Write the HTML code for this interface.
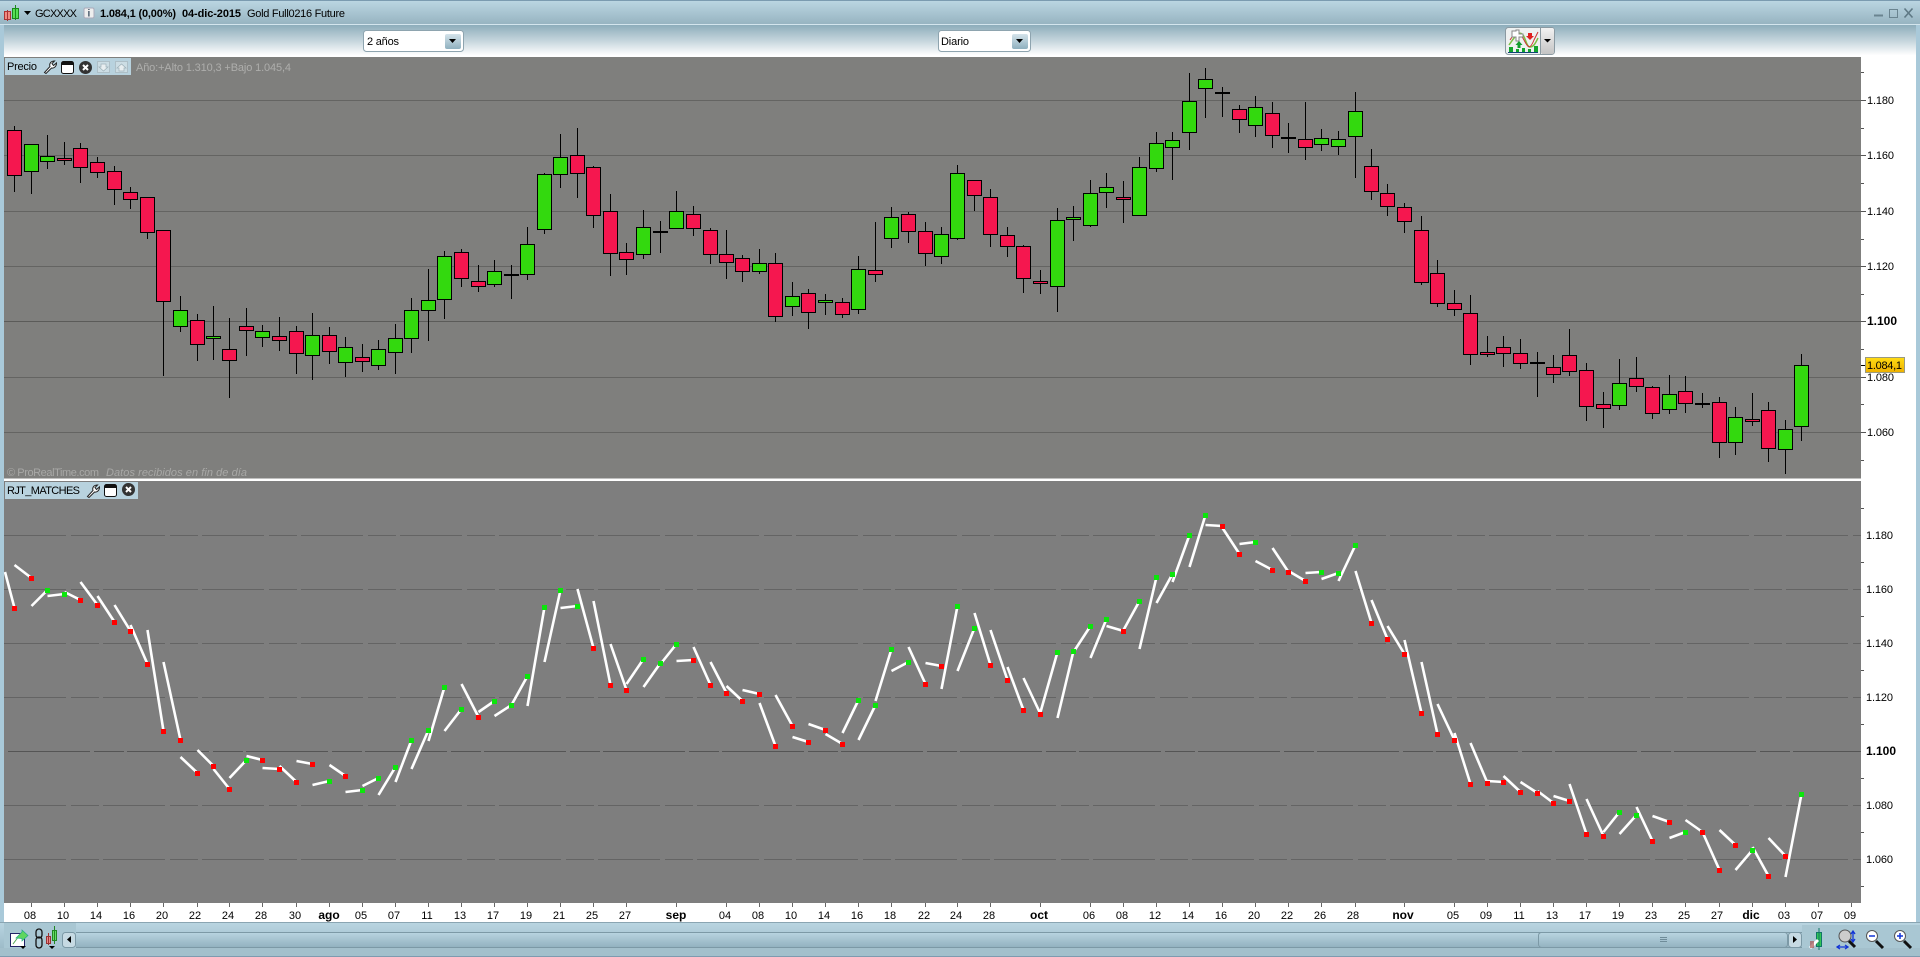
<!DOCTYPE html>
<html lang="es"><head><meta charset="utf-8"><title>GCXXXX</title>
<style>html,body{margin:0;padding:0;background:#fff;overflow:hidden}svg{display:block}text{font-family:"Liberation Sans",sans-serif;font-size:11px;fill:#000}</style>
</head><body>
<svg xmlns="http://www.w3.org/2000/svg" width="1920" height="957" viewBox="0 0 1920 957">
<defs>
<linearGradient id="gT" x1="0" y1="0" x2="0" y2="1"><stop offset="0" stop-color="#bcd7e3"/><stop offset="1" stop-color="#97b4c1"/></linearGradient>
<linearGradient id="gB" x1="0" y1="0" x2="0" y2="1"><stop offset="0" stop-color="#8dadbb"/><stop offset=".5" stop-color="#c6d6dd"/><stop offset=".95" stop-color="#fff"/></linearGradient>
<linearGradient id="gS" x1="0" y1="0" x2="0" y2="1"><stop offset="0" stop-color="#b9d5e1"/><stop offset="1" stop-color="#93b2c0"/></linearGradient>
<linearGradient id="gA" x1="0" y1="0" x2="0" y2="1"><stop offset="0" stop-color="#d5e3ea"/><stop offset="1" stop-color="#8fb0bf"/></linearGradient>
<linearGradient id="gY" x1="0" y1="0" x2="0" y2="1"><stop offset="0" stop-color="#ffdc14"/><stop offset="1" stop-color="#eeb000"/></linearGradient>
<linearGradient id="gG" x1="0" y1="0" x2="0" y2="1"><stop offset="0" stop-color="#f2f2f2"/><stop offset="1" stop-color="#c4c4c4"/></linearGradient>
<g id="wr"><path d="M1.5 12.5L7 6.5C6 3.500 8 1 11.500 1L9 3.500L10.500 5.500L13.500 3C13.500 6.500 11 8.500 8.500 8L3 13.500Z" fill="#fff" stroke="#222" stroke-width="1"/></g>
<g id="wi"><rect x=".5" y=".5" width="12" height="12" rx="2" fill="#fff" stroke="#111"/><rect x="1" y="1" width="11" height="3" fill="#111"/></g>
<g id="cl"><circle cx="6.500" cy="6.500" r="6.500" fill="#333"/><path d="M4 4L9 9M9 4L4 9" stroke="#fff" stroke-width="2"/></g>
</defs>

<rect width="1920" height="957" fill="#fff"/>
<!-- frame -->
<rect width="4" height="957" fill="#a9c9d9"/>
<rect x="1916" width="4" height="957" fill="#a9c9d9"/>
<rect width="1920" height="24" fill="url(#gT)"/>
<rect width="1920" height="1" fill="#7b9bb0"/>
<rect y="24" width="1920" height="1" fill="#d3e5ed"/>
<rect x="4" y="25" width="1912" height="32" fill="url(#gB)"/>
<rect x="1861" y="57" width="55" height="866" fill="#fff"/>

<!-- panels -->
<rect x="4" y="57" width="1857" height="421.500" fill="#7f7f7d"/>
<rect x="4" y="478.500" width="1857" height="2.500" fill="#fff"/>
<rect x="4" y="481" width="1857" height="422" fill="#7e7e7e"/>
<rect x="4" y="903" width="1912" height="20" fill="#fff"/>

<!-- grid -->
<path d="M4 100.500H1861M4 155.500H1861M4 211.500H1861M4 266.500H1861M4 377.500H1861M4 432.500H1861" stroke="#646462" stroke-width="1"/>
<path d="M4 321.500H1861" stroke="#5b5b59" stroke-width="1"/>
<path d="M4 535.500H1861M4 589.500H1861M4 643.500H1861M4 697.500H1861M4 805.500H1861M4 859.500H1861" stroke="#646464" stroke-width="1" stroke-dasharray="62 5 28 4"/>
<path d="M8 751.500H1861" stroke="#555" stroke-width="1" stroke-dasharray="82 4 30 3"/>

<!-- wicks -->
<path fill="none" stroke="#000" stroke-width="1" d="M14.500 126V192M31.500 144V194M47.500 135V169M64.500 142V165M80.500 143V183M97.500 157V178M114.500 166V205M130.500 187V209M147.500 197V239M163.500 230V376M180.500 296V332M197.500 314V361M213.500 306V360M229.500 318V398M246.500 308V356M262.500 325V347M279.500 317V351M296.500 326V374M312.500 313V380M329.500 327V364M345.500 337V377M362.500 344V372M378.500 340V370M395.500 324V374M411.500 298V353M428.500 269V341M444.500 251V319M461.500 249V287M478.500 265V292M494.500 260V287M511.500 265V299M527.500 227V280M544.500 173V234M560.500 134V188M577.500 128V198M593.500 166V228M610.500 194V276M626.500 243V275M643.500 210V259M660.500 221V253M676.500 191V229M693.500 206V236M710.500 228V264M726.500 230V279M742.500 255V282M759.500 249V274M775.500 253V322M792.500 282V316M808.500 289V329M825.500 294V315M842.500 298V318M858.500 256V314M875.500 222V282M891.500 207V248M908.500 212V243M925.500 222V266M941.500 227V264M957.500 165V240M974.500 180V211M990.500 189V247M1007.500 227V257M1023.500 245V293M1040.500 270V294M1057.500 208V312M1073.500 206V241M1090.500 180V227M1106.500 173V208M1123.500 181V223M1139.500 157V216M1156.500 132V172M1172.500 132V180M1189.500 73V150M1205.500 68V118M1222.500 87V117M1239.500 105V133M1255.500 96V137M1272.500 102V148M1288.500 123V153M1305.500 102V160M1321.500 129V151M1338.500 131V155M1355.500 92V178M1371.500 149V200M1387.500 184V216M1404.500 203V233M1421.500 216V285M1437.500 260V307M1454.500 290V316M1470.500 295V365M1487.500 336V357M1503.500 336V367M1520.500 339V369M1537.500 352V397M1553.500 355V383M1569.500 329V376M1586.500 363V421M1603.500 392V428M1619.500 359V410M1636.500 357V392M1652.500 386V419M1669.500 375V414M1685.500 376V413M1702.500 393V408M1719.500 397V458M1735.500 407V455M1752.500 393V426M1768.500 402V462M1785.500 420V474M1801.500 354V441"/>
<!-- doji -->
<path fill="none" stroke="#000" stroke-width="2" d="M504 275H519M653 232H668M1215 93H1230M1695 404H1710"/>
<!-- red bodies -->
<path fill="#f5174f" stroke="#000" stroke-width="1" d="M7.500 130.500h14V175.500h-14zM57.500 158.500h14V160.500h-14zM73.500 148.500h14V167.500h-14zM90.500 162.500h14V172.500h-14zM107.500 171.500h14V189.500h-14zM123.500 192.500h14V199.500h-14zM140.500 197.500h14V232.500h-14zM156.500 230.500h14V301.500h-14zM190.500 320.500h14V344.500h-14zM222.500 349.500h14V360.500h-14zM239.500 326.500h14V330.500h-14zM272.500 336.500h14V340.500h-14zM289.500 331.500h14V353.500h-14zM322.500 335.500h14V351.500h-14zM355.500 357.500h14V361.500h-14zM454.500 252.500h14V278.500h-14zM471.500 281.500h14V286.500h-14zM570.500 155.500h14V173.500h-14zM586.500 167.500h14V215.500h-14zM603.500 211.500h14V253.500h-14zM619.500 252.500h14V259.500h-14zM686.500 214.500h14V228.500h-14zM703.500 230.500h14V254.500h-14zM719.500 254.500h14V262.500h-14zM735.500 258.500h14V271.500h-14zM768.500 263.500h14V316.500h-14zM801.500 293.500h14V312.500h-14zM835.500 302.500h14V314.500h-14zM868.500 270.500h14V274.500h-14zM901.500 214.500h14V231.500h-14zM918.500 231.500h14V253.500h-14zM967.500 180.500h14V195.500h-14zM983.500 197.500h14V234.500h-14zM1000.500 235.500h14V246.500h-14zM1016.500 246.500h14V278.500h-14zM1033.500 281.500h14V283.500h-14zM1116.500 197.500h14V199.500h-14zM1232.500 109.500h14V119.500h-14zM1265.500 113.500h14V135.500h-14zM1281.500 137.500h14V138.500h-14zM1298.500 139.500h14V147.500h-14zM1364.500 166.500h14V191.500h-14zM1380.500 193.500h14V206.500h-14zM1397.500 207.500h14V221.500h-14zM1414.500 230.500h14V282.500h-14zM1430.500 273.500h14V303.500h-14zM1447.500 303.500h14V309.500h-14zM1463.500 313.500h14V354.500h-14zM1480.500 352.500h14V354.500h-14zM1496.500 347.500h14V353.500h-14zM1513.500 353.500h14V363.500h-14zM1530.500 362.500h14V363.500h-14zM1546.500 367.500h14V374.500h-14zM1562.500 355.500h14V371.500h-14zM1579.500 370.500h14V406.500h-14zM1596.500 404.500h14V408.500h-14zM1629.500 378.500h14V386.500h-14zM1645.500 387.500h14V413.500h-14zM1678.500 391.500h14V403.500h-14zM1712.500 402.500h14V442.500h-14zM1745.500 419.500h14V421.500h-14zM1761.500 410.500h14V448.500h-14z"/>
<!-- green bodies -->
<path fill="#33d90e" stroke="#000" stroke-width="1" d="M24.500 144.500h14V171.500h-14zM40.500 156.500h14V161.500h-14zM173.500 310.500h14V326.500h-14zM206.500 336.500h14V338.500h-14zM255.500 331.500h14V337.500h-14zM305.500 335.500h14V355.500h-14zM338.500 347.500h14V362.500h-14zM371.500 349.500h14V365.500h-14zM388.500 338.500h14V352.500h-14zM404.500 310.500h14V338.500h-14zM421.500 300.500h14V310.500h-14zM437.500 256.500h14V299.500h-14zM487.500 271.500h14V284.500h-14zM520.500 244.500h14V274.500h-14zM537.500 174.500h14V229.500h-14zM553.500 157.500h14V174.500h-14zM636.500 227.500h14V254.500h-14zM669.500 211.500h14V228.500h-14zM752.500 263.500h14V271.500h-14zM785.500 296.500h14V306.500h-14zM818.500 300.500h14V302.500h-14zM851.500 269.500h14V309.500h-14zM884.500 217.500h14V238.500h-14zM934.500 234.500h14V256.500h-14zM950.500 173.500h14V238.500h-14zM1050.500 220.500h14V286.500h-14zM1066.500 217.500h14V219.500h-14zM1083.500 193.500h14V225.500h-14zM1099.500 187.500h14V192.500h-14zM1132.500 167.500h14V215.500h-14zM1149.500 143.500h14V168.500h-14zM1165.500 140.500h14V147.500h-14zM1182.500 101.500h14V132.500h-14zM1198.500 79.500h14V88.500h-14zM1248.500 107.500h14V125.500h-14zM1314.500 138.500h14V144.500h-14zM1331.500 139.500h14V146.500h-14zM1348.500 111.500h14V136.500h-14zM1612.500 383.500h14V405.500h-14zM1662.500 394.500h14V409.500h-14zM1728.500 417.500h14V442.500h-14zM1778.500 429.500h14V449.500h-14zM1794.500 365.500h14V426.500h-14z"/>

<!-- lower white segments -->
<path fill="none" stroke="#fff" stroke-width="2.600" d="M5 572L14.500 608M14.500 565L31.500 578M31.500 606L47.500 590M47.500 596L64.500 594M64.500 592L80.500 600M80.500 582L97.500 605M97.500 596L114.500 622M114.500 605L130.500 631M130.500 625L147.500 664M147.500 630L163.500 731M163.500 662L180.500 740M180.500 757L197.500 773M197.500 750L213.500 766M213.500 769L229.500 789M229.500 778L246.500 760M246.500 756L262.500 760M262.500 768L279.500 769M279.500 766L296.500 782M296.500 761L312.500 764M312.500 785L329.500 781M329.500 765L345.500 776M345.500 792L362.500 790M362.500 786L378.500 778M378.500 795L395.500 767M395.500 782L411.500 740M411.500 769L428.500 730M428.500 741L444.500 687M444.500 731L461.500 709M461.500 684L478.500 717M478.500 712L494.500 701M494.500 716L511.500 705M511.500 705L527.500 676M527.500 706L544.500 607M544.500 662L560.500 590M560.500 608L577.500 606M577.500 589L593.500 648M593.500 601L610.500 685M610.500 644L626.500 690M626.500 684L643.500 659M643.500 687L660.500 663M660.500 664L676.500 644M676.500 661L693.500 660M693.500 647L710.500 685M710.500 662L726.500 693M726.500 686L742.500 701M742.500 690L759.500 694M759.500 703L775.500 746M775.500 695L792.500 726M792.500 737L808.500 742M808.500 724L825.500 730M825.500 734L842.500 744M842.500 733L858.500 700M858.500 740L875.500 705M875.500 701L891.500 649M891.500 671L908.500 662M908.500 647L925.500 684M925.500 663L941.500 666M941.500 689L957.500 606M957.500 671L974.500 628M974.500 613L990.500 665M990.500 630L1007.500 680M1007.500 667L1023.500 710M1023.500 678L1040.500 714M1040.500 712L1057.500 652M1057.500 718L1073.500 651M1073.500 652L1090.500 626M1090.500 658L1106.500 619M1106.500 626L1123.500 631M1123.500 630L1139.500 601M1139.500 649L1156.500 577M1156.500 603L1172.500 574M1172.500 582L1189.500 535M1189.500 567L1205.500 515M1205.500 525L1222.500 526M1222.500 528L1239.500 554M1239.500 544L1255.500 542M1255.500 561L1272.500 570M1272.500 548L1288.500 572M1288.500 571L1305.500 581M1305.500 573L1321.500 572M1321.500 579L1338.500 573M1338.500 581L1355.500 545M1355.500 571L1371.500 623M1371.500 600L1387.500 639M1387.500 626L1404.500 654M1404.500 640L1421.500 713M1421.500 662L1437.500 734M1437.500 704L1454.500 740M1454.500 733L1470.500 784M1470.500 743L1487.500 783M1487.500 781L1503.500 782M1503.500 776L1520.500 792M1520.500 782L1537.500 793M1537.500 791L1553.500 803M1553.500 796L1569.500 801M1569.500 784L1586.500 834M1586.500 799L1603.500 836M1603.500 832L1619.500 812M1619.500 834L1636.500 815M1636.500 807L1652.500 841M1652.500 816L1669.500 822M1669.500 838L1685.500 832M1685.500 820L1702.500 832M1702.500 832L1719.500 870M1719.500 830L1735.500 845M1735.500 870L1752.500 850M1752.500 847L1768.500 876M1768.500 838L1785.500 856M1785.500 877L1801.500 794"/>
<!-- dots -->
<g transform="translate(0 .5)">
<path fill="none" stroke="#f00" stroke-width="5" d="M12 608h5M29 578h5M78 600h5M95 605h5M112 622h5M128 631h5M145 664h5M161 731h5M178 740h5M195 773h5M211 766h5M227 789h5M260 760h5M277 769h5M294 782h5M310 764h5M343 776h5M476 717h5M591 648h5M608 685h5M624 690h5M691 660h5M708 685h5M724 693h5M740 701h5M757 694h5M773 746h5M790 726h5M806 742h5M823 730h5M840 744h5M923 684h5M939 666h5M988 665h5M1005 680h5M1021 710h5M1038 714h5M1121 631h5M1220 526h5M1237 554h5M1270 570h5M1286 572h5M1303 581h5M1369 623h5M1385 639h5M1402 654h5M1419 713h5M1435 734h5M1452 740h5M1468 784h5M1485 783h5M1501 782h5M1518 792h5M1535 793h5M1551 803h5M1567 801h5M1584 834h5M1601 836h5M1650 841h5M1667 822h5M1700 832h5M1717 870h5M1733 845h5M1766 876h5M1783 856h5"/>
<path fill="none" stroke="#0be60b" stroke-width="5" d="M45 590h5M62 594h5M244 760h5M327 781h5M360 790h5M376 778h5M393 767h5M409 740h5M426 730h5M442 687h5M459 709h5M492 701h5M509 705h5M525 676h5M542 607h5M558 590h5M575 606h5M641 659h5M658 663h5M674 644h5M856 700h5M873 705h5M889 649h5M906 662h5M955 606h5M972 628h5M1055 652h5M1071 651h5M1088 626h5M1104 619h5M1137 601h5M1154 577h5M1170 574h5M1187 535h5M1203 515h5M1253 542h5M1319 572h5M1336 573h5M1353 545h5M1617 812h5M1634 815h5M1683 832h5M1750 850h5M1799 794h5"/>
</g>

<!-- right axis -->
<path stroke="#555" stroke-width="1" d="M1861 72.500h3M1861 128.500h3M1861 183.500h3M1861 239.500h3M1861 294.500h3M1861 349.500h3M1861 404.500h3M1861 460.500h3M1861 100.500h5M1861 155.500h5M1861 211.500h5M1861 266.500h5M1861 321.500h5M1861 377.500h5M1861 432.500h5M1861 508.500h3M1861 562.500h3M1861 616.500h3M1861 670.500h3M1861 724.500h3M1861 778.500h3M1861 832.500h3M1861 886.500h3"/>
<path stroke="#000" stroke-width="1" d="M1861 365.500h5"/>
<g>
<text x="1867" y="104" textLength="27">1.180</text>
<text x="1867" y="159" textLength="27">1.160</text>
<text x="1867" y="215" textLength="27">1.140</text>
<text x="1867" y="270" textLength="27">1.120</text>
<text x="1867" y="325" textLength="30" style="font-weight:bold;font-size:12px">1.100</text>
<text x="1867" y="381" textLength="27">1.080</text>
<text x="1867" y="436" textLength="27">1.060</text>
<text x="1866" y="539" textLength="27">1.180</text>
<text x="1866" y="593" textLength="27">1.160</text>
<text x="1866" y="647" textLength="27">1.140</text>
<text x="1866" y="701" textLength="27">1.120</text>
<text x="1866" y="755" textLength="30" style="font-weight:bold;font-size:12px">1.100</text>
<text x="1866" y="809" textLength="27">1.080</text>
<text x="1866" y="863" textLength="27">1.060</text>
</g>
<rect x="1865.500" y="357.500" width="39" height="15" fill="url(#gY)" stroke="#9a9a80"/>
<text x="1867" y="369" textLength="35">1.084,1</text>

<!-- bottom axis -->
<path stroke="#666" stroke-width="1" d="M31.500 903v4M64.500 903v4M97.500 903v4M130.500 903v4M163.500 903v4M197.500 903v4M229.500 903v4M262.500 903v4M296.500 903v4M329.500 903v4M362.500 903v4M395.500 903v4M428.500 903v4M461.500 903v4M494.500 903v4M527.500 903v4M560.500 903v4M593.500 903v4M626.500 903v4M676.500 903v4M726.500 903v4M759.500 903v4M792.500 903v4M825.500 903v4M858.500 903v4M891.500 903v4M925.500 903v4M957.500 903v4M990.500 903v4M1040.500 903v4M1090.500 903v4M1123.500 903v4M1156.500 903v4M1189.500 903v4M1222.500 903v4M1255.500 903v4M1288.500 903v4M1321.500 903v4M1355.500 903v4M1404.500 903v4M1454.500 903v4M1487.500 903v4M1520.500 903v4M1553.500 903v4M1586.500 903v4M1619.500 903v4M1652.500 903v4M1685.500 903v4M1719.500 903v4M1752.500 903v4M1785.500 903v4M1818.500 903v4M1851.500 903v4"/>
<g text-anchor="middle">
<text x="30" y="919">08</text><text x="63" y="919">10</text><text x="96" y="919">14</text><text x="129" y="919">16</text><text x="162" y="919">20</text><text x="195" y="919">22</text><text x="228" y="919">24</text><text x="261" y="919">28</text><text x="295" y="919">30</text>
<text x="329" y="919" style="font-weight:bold;font-size:12px">ago</text>
<text x="361" y="919">05</text><text x="394" y="919">07</text><text x="427" y="919">11</text><text x="460" y="919">13</text><text x="493" y="919">17</text><text x="526" y="919">19</text><text x="559" y="919">21</text><text x="592" y="919">25</text><text x="625" y="919">27</text>
<text x="676" y="919" style="font-weight:bold;font-size:12px">sep</text>
<text x="725" y="919">04</text><text x="758" y="919">08</text><text x="791" y="919">10</text><text x="824" y="919">14</text><text x="857" y="919">16</text><text x="890" y="919">18</text><text x="924" y="919">22</text><text x="956" y="919">24</text><text x="989" y="919">28</text>
<text x="1039" y="919" style="font-weight:bold;font-size:12px">oct</text>
<text x="1089" y="919">06</text><text x="1122" y="919">08</text><text x="1155" y="919">12</text><text x="1188" y="919">14</text><text x="1221" y="919">16</text><text x="1254" y="919">20</text><text x="1287" y="919">22</text><text x="1320" y="919">26</text><text x="1353" y="919">28</text>
<text x="1403" y="919" style="font-weight:bold;font-size:12px">nov</text>
<text x="1453" y="919">05</text><text x="1486" y="919">09</text><text x="1519" y="919">11</text><text x="1552" y="919">13</text><text x="1585" y="919">17</text><text x="1618" y="919">19</text><text x="1651" y="919">23</text><text x="1684" y="919">25</text><text x="1717" y="919">27</text>
<text x="1751" y="919" style="font-weight:bold;font-size:12px">dic</text>
<text x="1784" y="919">03</text><text x="1817" y="919">07</text><text x="1850" y="919">09</text>
</g>

<!-- header -->
<rect x="4.500" y="11.500" width="6" height="8" fill="#f08a80" stroke="#a33"/><path d="M7.500 10v11" stroke="#a33"/>
<rect x="12.500" y="8.500" width="6" height="10" fill="#55e055" stroke="#1a8a1a"/><path d="M15.500 5v15" stroke="#1a8a1a"/>
<path d="M24 11h7l-3.500 4z" fill="#000"/>
<text x="35" y="17" textLength="42" fill="#222">GCXXXX</text>
<rect x="84" y="8" width="10" height="10" rx="1.500" fill="#eee" stroke="#aab"/>
<text x="87.500" y="16.500" style="font-size:10px;font-weight:bold;fill:#456">i</text>
<text x="100" y="17" textLength="76" style="font-weight:bold">1.084,1 (0,00%)</text>
<text x="182" y="17" textLength="59" style="font-weight:bold">04-dic-2015</text>
<text x="247" y="17" textLength="98">Gold Full0216 Future</text>
<path d="M1874 15.500h9" stroke="#6a8490" stroke-width="2"/>
<rect x="1889.500" y="9.500" width="8" height="8" fill="none" stroke="#6a8490"/>
<path d="M1904.500 8.500l8 9M1912.500 8.500l-8 9" stroke="#5f7985" stroke-width="1.600"/>

<!-- combos -->
<rect x="363.500" y="30.500" width="100" height="21" rx="3" fill="#fff" stroke="#8ea4af"/>
<text x="367" y="45" textLength="32">2 años</text>
<rect x="445" y="34" width="16" height="15" rx="2" fill="url(#gA)"/>
<path d="M449 39h7l-3.500 4z" fill="#000"/>
<rect x="938.500" y="30.500" width="92" height="21" rx="3" fill="#fff" stroke="#8ea4af"/>
<text x="941" y="45" textLength="28">Diario</text>
<rect x="1012" y="34" width="16" height="15" rx="2" fill="url(#gA)"/>
<path d="M1016 39h7l-3.500 4z" fill="#000"/>

<!-- indicator button -->
<rect x="1505.500" y="27.500" width="49" height="27" rx="3" fill="#eef1f1" stroke="#8b9aa2"/>
<rect x="1541" y="28" width="13" height="26" rx="2" fill="url(#gG)"/>
<path d="M1540.500 28v26" stroke="#8b9aa2"/>
<path d="M1544 39h7l-3.500 3.500z" fill="#000"/>
<path d="M1509 45C1514 38 1518 31 1522 34S1526 47 1530 47S1536 42 1538 38" fill="none" stroke="#7bc043" stroke-width="1.500"/>
<path d="M1510 40C1516 30 1520 32 1524 40S1530 50 1534 40L1538 32" fill="none" stroke="#c33" stroke-width="1"/>
<path d="M1512 31h4v-1h3v4h4v3h-4v4h-3v-4h-4z" fill="#fff" stroke="#888"/>
<path d="M1528 33h4v3h2l-4 4-4-4h2z" fill="#e02020"/>
<path d="M1519 41l-3.500 4h2v3h3v-3h2z" fill="#119c2e"/>
<path d="M1509 47h4v5h-4zM1522 48h3v4h-3zM1534 46h4v6h-4zM1516 49h3v3h-3zM1528 49h3v3h-3z" fill="#12a52b"/>
<path d="M1508 52.500h30" stroke="#147" stroke-width="1"/>

<!-- panel tabs -->
<rect x="5" y="58" width="126" height="17" fill="#b8d2de"/>
<text x="7" y="70" textLength="30">Precio</text>
<use href="#wr" x="43" y="60"/><use href="#wi" x="61" y="61"/><use href="#cl" x="79" y="61"/>
<rect x="97.500" y="61.500" width="12" height="11" fill="#ccdde4" stroke="#aebfc7"/><path d="M101 64h5v3h2l-4.500 4-4.500-4h2z" fill="#e8eef0" stroke="#9db0b8" stroke-width=".7"/>
<rect x="115.500" y="61.500" width="12" height="11" fill="#ccdde4" stroke="#aebfc7"/><path d="M119 71h5v-3h2l-4.500-4-4.500 4h2z" fill="#e8eef0" stroke="#9db0b8" stroke-width=".7"/>
<text x="136" y="71" textLength="155" style="fill:#aeaeac">Año:+Alto 1.310,3 +Bajo 1.045,4</text>

<rect x="5" y="482" width="133" height="17" fill="#b8d2de"/>
<text x="7" y="494" textLength="73">RJT_MATCHES</text>
<use href="#wr" x="86" y="484"/><use href="#wi" x="104" y="484"/><use href="#cl" x="122" y="483"/>

<text x="7" y="476" textLength="92" style="fill:#a8a8a6">© ProRealTime.com</text>
<text x="106" y="476" textLength="141" style="fill:#a8a8a6;font-style:italic">Datos recibidos en fin de día</text>

<!-- status bar -->
<rect x="0" y="923" width="1920" height="34" fill="url(#gS)"/>
<rect x="0" y="922" width="1920" height="1" fill="#8aa5b2"/>
<rect x="76" y="932" width="1462" height="15" fill="url(#gS)"/>
<path d="M76 932.500H1920M76 947.500H1920" stroke="#7c99a6" stroke-width="1"/>
<rect x="1802" y="925" width="118" height="32" fill="#a9c7d3"/>
<rect x="0" y="948" width="1920" height="9" fill="#a3c0cc"/>
<rect x="0" y="956" width="1920" height="1" fill="#7e9bb0"/>
<rect x="4" y="923" width="72" height="25" fill="#a9c7d3"/>
<!-- left icons -->
<rect x="10.500" y="933.500" width="14" height="13" fill="#fff" stroke="#226"/>
<path d="M13 944L19 936" stroke="#5a5" stroke-width="1"/>
<path d="M16 938L22 932V930L28 935.500L22 941V938.500Z" fill="#5fd65f" stroke="#2a8" stroke-width=".7"/>
<path d="M20 946h6l-3 3z" fill="#000"/>
<rect x="36" y="929" width="6" height="9" rx="3" fill="none" stroke="#111" stroke-width="1.300"/>
<rect x="36" y="937" width="6" height="11" rx="3" fill="none" stroke="#111" stroke-width="1.300"/>
<rect x="46.500" y="936.500" width="4" height="7" fill="#e88" stroke="#933"/><path d="M48.500 933v12" stroke="#933"/>
<rect x="52.500" y="930.500" width="4" height="10" fill="#6d6" stroke="#282"/><path d="M54.500 926v18" stroke="#282"/>
<path d="M49 946h6l-3 3z" fill="#000"/>
<rect x="62.500" y="932.500" width="13" height="15" rx="3" fill="#c6dae3" stroke="#7c99a6"/>
<path d="M71 936v7l-4-3.500z" fill="#000"/>
<!-- scrollbar -->
<rect x="1538.500" y="932.500" width="249" height="15" rx="3" fill="url(#gS)" stroke="#7c99a6"/>
<path d="M1660 937.500h7M1660 939.500h7M1660 941.500h7" stroke="#6f8c99"/>
<rect x="1788.500" y="932.500" width="13" height="15" rx="3" fill="#c6dae3" stroke="#7c99a6"/>
<path d="M1793 936v7l4-3.500z" fill="#000"/>
<!-- right icons -->
<rect x="1816.500" y="932.500" width="5" height="14" fill="#33c455" stroke="#176"/><path d="M1819 928v22" stroke="#176"/>
<path d="M1810 948L1818 940" stroke="#fff" stroke-width="3"/><rect x="1810" y="941" width="4" height="7" fill="#a55" opacity=".7"/>
<circle cx="1845" cy="936" r="6" fill="#ccc" stroke="#555"/><path d="M1849 941L1855 947" stroke="#111" stroke-width="3"/>
<path d="M1853 932v9M1851 934l2-3 2 3M1851 939l2 3 2-3M1838 947h9M1840 945l-3 2 3 2M1845 945l3 2-3 2" fill="none" stroke="#1134d6" stroke-width="1.300"/>
<circle cx="1872" cy="936" r="5.500" fill="#fff" stroke="#555"/><path d="M1869 936h6" stroke="#1134d6" stroke-width="1.500"/><path d="M1876 941L1883 948" stroke="#111" stroke-width="3"/>
<circle cx="1900" cy="936" r="5.500" fill="#fff" stroke="#555"/><path d="M1897 936h6M1900 933v6" stroke="#1134d6" stroke-width="1.500"/><path d="M1904 941L1911 948" stroke="#111" stroke-width="3"/>
</svg>
</body></html>
